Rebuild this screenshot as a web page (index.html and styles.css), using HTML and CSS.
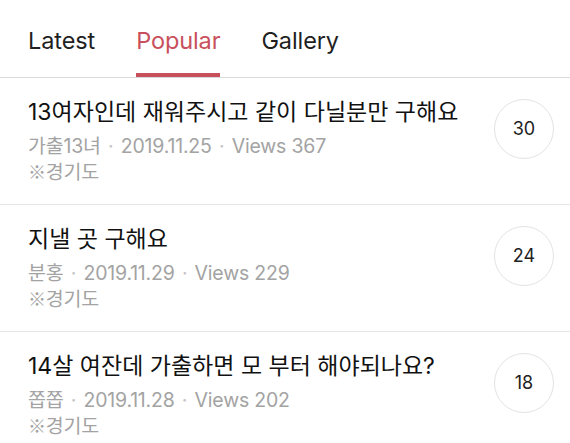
FILE: index.html
```html
<!DOCTYPE html>
<html lang="ko">
<head>
<meta charset="utf-8">
<link rel="stylesheet" href="styles.css">
</head>
<body>
<nav class="tabs">
  <div class="tab">Latest</div>
  <div class="tab active">Popular</div>
  <div class="tab">Gallery</div>
</nav>
<ul class="list">
  <li class="item">
    <div class="body">
      <div class="title">13여자인데 재워주시고 같이 다닐분만 구해요</div>
      <div class="meta">가출13녀 <span class="dot">·</span> 2019.11.25 <span class="dot">·</span> Views 367</div>
      <div class="meta"><span class="mark">※</span>경기도</div>
    </div>
    <div class="count">30</div>
  </li>
  <li class="item">
    <div class="body">
      <div class="title">지낼 곳 구해요</div>
      <div class="meta">분홍 <span class="dot">·</span> 2019.11.29 <span class="dot">·</span> Views 229</div>
      <div class="meta"><span class="mark">※</span>경기도</div>
    </div>
    <div class="count">24</div>
  </li>
  <li class="item">
    <div class="body">
      <div class="title">14살 여잔데 가출하면 모 부터 해야되나요?</div>
      <div class="meta">쫍쫍 <span class="dot">·</span> 2019.11.28 <span class="dot">·</span> Views 202</div>
      <div class="meta"><span class="mark">※</span>경기도</div>
    </div>
    <div class="count">18</div>
  </li>
</ul>
</body>
</html>
```

FILE: styles.css
```css
* { box-sizing: border-box; }
html, body { margin: 0; padding: 0; background: #fff; }
body {
  width: 570px;
  height: 443px;
  overflow: hidden;
  font-family: "Inter", "Noto Sans CJK KR", sans-serif;
  color: #1a1a1a;
}
.tabs {
  display: flex;
  gap: 41px;
  padding: 25px 0 0 28px;
  border-bottom: 1px solid #d9d9d9;
  height: 78px;
}
.tab {
  font-size: 23.5px;
  line-height: 32px;
  height: 52px;
  color: #1f1f1f;
  letter-spacing: -0.1px;
}
.tab.active {
  color: #c8505c;
  border-bottom: 4px solid #c8505c;
}
.list { list-style: none; margin: 0; padding: 0; }
.item {
  display: flex;
  align-items: center;
  height: 127px;
  padding: 0 16px 0 28px;
  border-bottom: 1px solid #e6e6e6;
}
.body { flex: 1; }
.title {
  font-size: 23px;
  line-height: 30px;
  letter-spacing: 0;
  color: #111;
  margin-bottom: 7px;
}
.meta {
  font-size: 19.5px;
  line-height: 25px;
  color: #a3a3a3;
  letter-spacing: -0.2px;
}
.mark { font-family: "Noto Sans CJK KR", sans-serif; font-size: 18px; }
.dot { color: #c4c4c4; padding: 0 2px; }
.count {
  width: 60px;
  height: 60px;
  margin-bottom: 25px;
  border: 1px solid #e3e3e3;
  border-radius: 50%;
  display: flex;
  align-items: center;
  justify-content: center;
  font-size: 18px;
  color: #222;
}
```
